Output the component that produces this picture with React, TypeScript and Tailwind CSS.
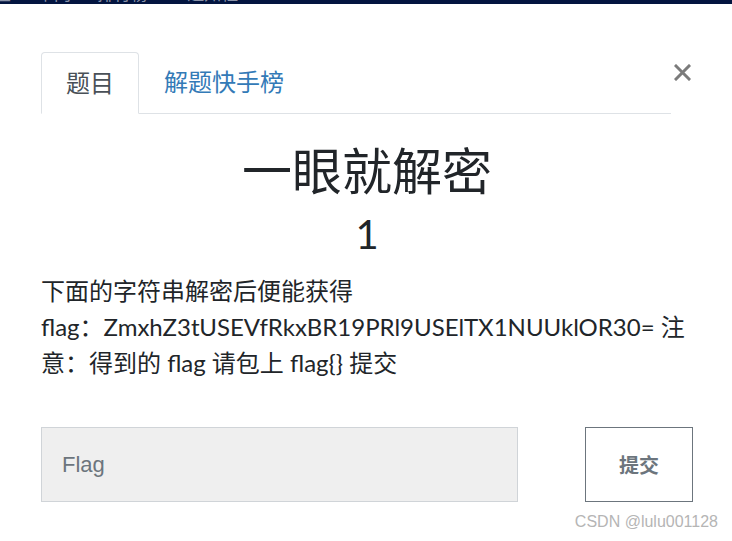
import React from 'react';

const sans = 'font-["Lato","Noto_Sans_CJK_SC",sans-serif]';

// Only the bottom few pixels of the site navbar peek out above the modal
const NavStrip = () => (
  <div className="h-[4px] overflow-hidden bg-[#031540]">
    <div className={`-mt-[15px] flex items-end gap-[26px] text-[17px] leading-[18px] text-[#8b93a8] ${sans}`}>
      <span className="-ml-[6px]">主</span>
      <span>单门</span>
      <span>排行榜 ▾</span>
      <span>通知栏 ▾</span>
    </div>
  </div>
);

const CloseIcon = () => (
  <svg width="17" height="17" viewBox="0 0 17 17" className="block">
    <path d="M2 2 L15 15 M15 2 L2 15" stroke="#7b7b7b" strokeWidth="3" strokeLinecap="square" />
  </svg>
);

export default function App() {
  return (
    <div className={`relative min-h-[541px] w-[732px] bg-white text-[#212529] ${sans}`}>
      <NavStrip />

      <div className="pl-[41px] pr-[39px] pt-[48px]">
        {/* Tabs + close */}
        <div className="flex items-start">
          <ul className="flex flex-1 border-b border-[#dee2e6]">
            <li className="-mb-px rounded-t-[4px] border border-[#dee2e6] border-b-white bg-white px-[24px] py-[12px] text-[24px] leading-[36px] text-[#495057]">
              题目
            </li>
            <li className="px-[25px] py-[12px] text-[24px] leading-[36px] text-[#337ab7]">解题快手榜</li>
          </ul>
          <button className="ml-[3px] mt-[12px] p-0 pr-[2px]" aria-label="Close">
            <CloseIcon />
          </button>
        </div>

        {/* Challenge */}
        <div className="pt-[27px] text-center">
          <h2 className="text-[50px] font-normal leading-[60px]">一眼就解密</h2>
          <h3 className="mt-[9px] text-[40px] font-normal leading-[48px]">1</h3>
        </div>

        <p className="mt-[15px] text-[24px] leading-[36px] text-[#212529]">
          下面的字符串解密后便能获得
          <br />
          flag：ZmxhZ3tUSEVfRkxBR19PRl9USElTX1NUUklOR30= 注意：得到的 flag 请包上 flag{'{}'} 提交
        </p>

        {/* Submit row */}
        <div className="mt-[46px] flex items-center justify-between">
          <div className="flex h-[75px] w-[477px] items-center border border-[#d0d4d8] bg-[#efefef] px-[20px] font-['Liberation_Sans',sans-serif] text-[22px] text-[#6c757d]">
            Flag
          </div>
          <button className="h-[75px] w-[108px] border border-[#6c757d] bg-white text-[20px] font-bold text-[#6c757d]">
            提交
          </button>
        </div>
      </div>

      {/* CSDN watermark */}
      <div className="absolute right-[14px] top-[512px] font-['Liberation_Sans','Noto_Sans_CJK_SC',sans-serif] text-[16px] leading-[20px] text-[#b5b5b5]">
        CSDN @lulu001128
      </div>
    </div>
  );
}
